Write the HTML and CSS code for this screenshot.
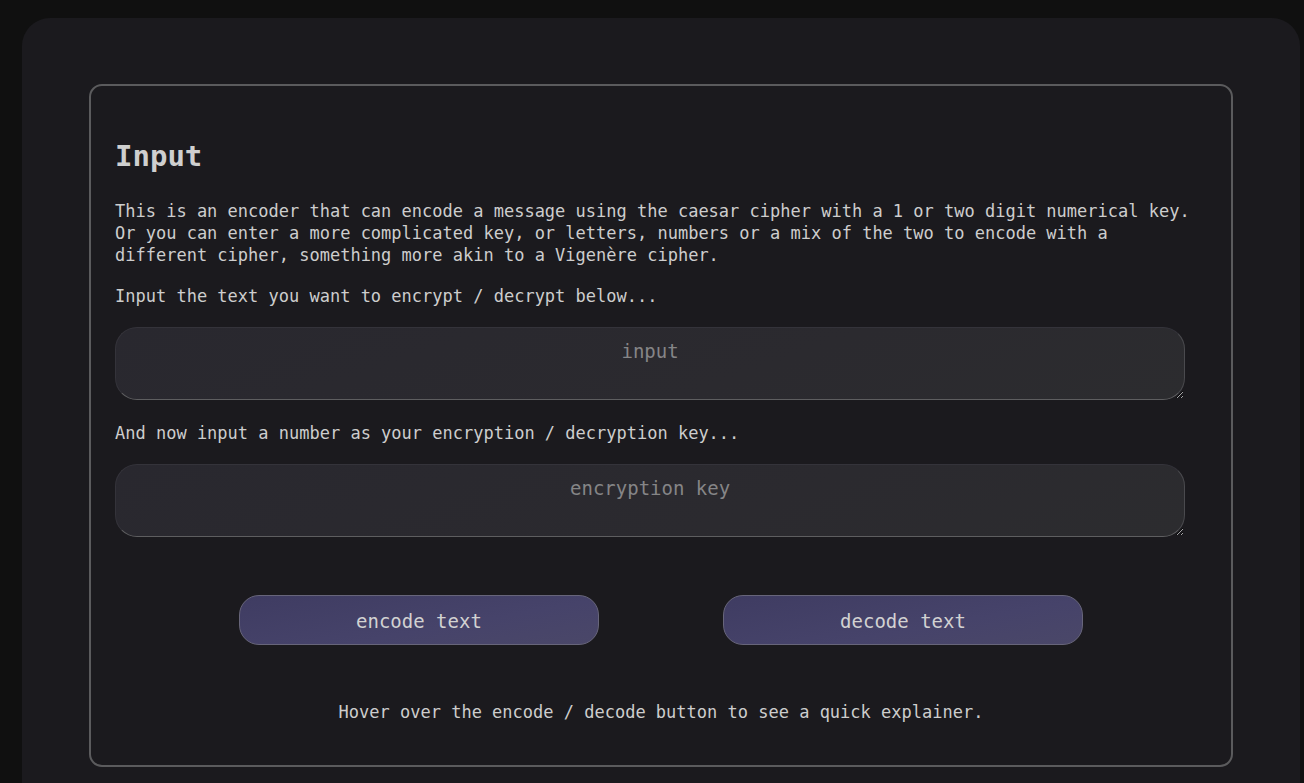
FILE: index.html
```html
<!DOCTYPE html>
<html lang="en">
<head>
<meta charset="utf-8">
<title>Cipher encoder</title>
<link rel="stylesheet" href="styles.css">
</head>
<body>
<main class="card">
  <section class="panel">
    <h2 class="title">Input</h2>
    <p class="intro">This is an encoder that can encode a message using the caesar cipher with a 1 or two digit numerical key. Or you can enter a more complicated key, or letters, numbers or a mix of the two to encode with a different cipher, something more akin to a Vigenère cipher.</p>
    <p class="label">Input the text you want to encrypt / decrypt below...</p>
    <textarea class="field" placeholder="input"></textarea>
    <p class="label label-key">And now input a number as your encryption / decryption key...</p>
    <textarea class="field" placeholder="encryption key"></textarea>
    <div class="actions">
      <button class="btn" type="button">encode text</button>
      <button class="btn" type="button">decode text</button>
    </div>
    <p class="hint">Hover over the encode / decode button to see a quick explainer.</p>
  </section>
</main>
</body>
</html>
```

FILE: styles.css
```css
html, body {
  margin: 0;
  padding: 0;
  height: 100%;
  overflow: hidden;
}
body {
  background: #101010;
  font-family: "DejaVu Sans Mono", "Liberation Mono", monospace;
  color: #cdcdcd;
}
.card {
  margin: 18px 4px 0 22px;
  background: #1b1a1e;
  border-radius: 28px;
  padding: 66px 67px 40px 67px;
  min-height: 800px;
}
.panel {
  border: 2px solid #5b5b5d;
  border-radius: 13px;
  padding: 53px 24px 42px 24px;
}
.title {
  margin: 0;
  font-size: 29px;
  line-height: 34px;
  font-weight: bold;
  color: #cfcfcf;
}
.intro, .label, .hint {
  font-size: 17px;
  line-height: 22px;
  margin: 0;
}
.intro {
  margin-top: 27px;
}
.label {
  margin-top: 19px;
}
.label-key {
  margin-top: 22px;
}
.field {
  display: block;
  box-sizing: border-box;
  width: 98%;
  height: 73px;
  margin-top: 20px;
  padding: 11px 12px 12px;
  border-radius: 22px;
  border: 1px solid #34333a;
  border-bottom-color: #5e5e60;
  border-right-color: #4a4a4e;
  background: linear-gradient(160deg, #29282f 0%, #2b2a2f 60%, #2c2c2f 100%);
  color: #cfcfcf;
  font-family: "DejaVu Sans Mono", "Liberation Mono", monospace;
  font-size: 19px;
  line-height: 24px;
  text-align: center;
  outline: none;
}
.field::placeholder {
  color: #858587;
}
.actions {
  display: flex;
  justify-content: space-evenly;
  margin-top: 58px;
}
.btn {
  width: 33%;
  height: 50px;
  padding-top: 2px;
  border-radius: 20px;
  border: 1px solid #67657a;
  background: linear-gradient(170deg, #3f3c62 0%, #46436a 60%, #4a4768 100%);
  color: #d2d2d2;
  font-family: "DejaVu Sans Mono", "Liberation Mono", monospace;
  font-size: 19px;
  font-weight: normal;
  cursor: pointer;
}
.hint {
  margin-top: 56px;
  text-align: center;
}
```
